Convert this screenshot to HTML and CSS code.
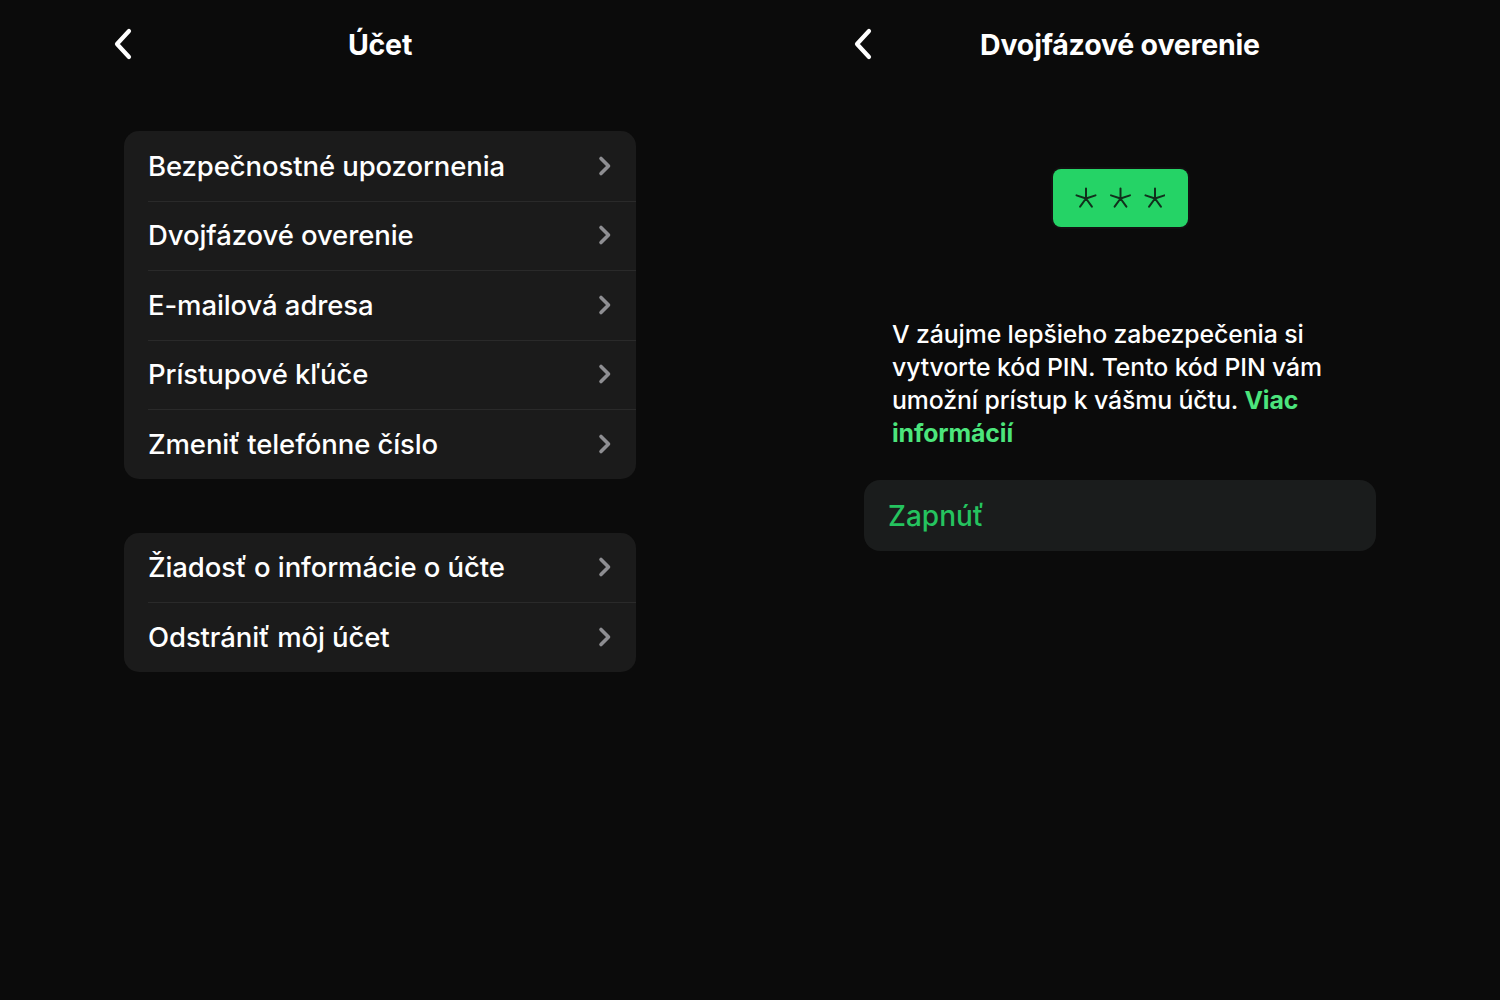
FILE: index.html
```html
<!DOCTYPE html>
<html lang="sk">
<head>
<meta charset="utf-8">
<link rel="stylesheet" href="styles.css">
</head>
<body>
<div class="screens">
  <section class="panel">
    <header class="nav">
      <svg class="back" viewBox="0 0 24 34" width="24" height="34"><path d="M18 4 L6 17 L18 30" fill="none" stroke="#fff" stroke-width="4.2" stroke-linecap="round" stroke-linejoin="round"/></svg>
      <h1 class="title">Účet</h1>
    </header>
    <div class="group g1">
      <div class="row"><span>Bezpečnostné upozornenia</span><svg class="chev" viewBox="0 0 14 22" width="14" height="22"><path d="M3 3.5 L10.5 11 L3 18.5" fill="none" stroke="#8e8e92" stroke-width="3.6" stroke-linecap="round" stroke-linejoin="round"/></svg></div>
      <div class="row"><span>Dvojfázové overenie</span><svg class="chev" viewBox="0 0 14 22" width="14" height="22"><path d="M3 3.5 L10.5 11 L3 18.5" fill="none" stroke="#8e8e92" stroke-width="3.6" stroke-linecap="round" stroke-linejoin="round"/></svg></div>
      <div class="row"><span>E-mailová adresa</span><svg class="chev" viewBox="0 0 14 22" width="14" height="22"><path d="M3 3.5 L10.5 11 L3 18.5" fill="none" stroke="#8e8e92" stroke-width="3.6" stroke-linecap="round" stroke-linejoin="round"/></svg></div>
      <div class="row"><span>Prístupové kľúče</span><svg class="chev" viewBox="0 0 14 22" width="14" height="22"><path d="M3 3.5 L10.5 11 L3 18.5" fill="none" stroke="#8e8e92" stroke-width="3.6" stroke-linecap="round" stroke-linejoin="round"/></svg></div>
      <div class="row"><span>Zmeniť telefónne číslo</span><svg class="chev" viewBox="0 0 14 22" width="14" height="22"><path d="M3 3.5 L10.5 11 L3 18.5" fill="none" stroke="#8e8e92" stroke-width="3.6" stroke-linecap="round" stroke-linejoin="round"/></svg></div>
    </div>
    <div class="group g2">
      <div class="row"><span>Žiadosť o informácie o účte</span><svg class="chev" viewBox="0 0 14 22" width="14" height="22"><path d="M3 3.5 L10.5 11 L3 18.5" fill="none" stroke="#8e8e92" stroke-width="3.6" stroke-linecap="round" stroke-linejoin="round"/></svg></div>
      <div class="row"><span>Odstrániť môj účet</span><svg class="chev" viewBox="0 0 14 22" width="14" height="22"><path d="M3 3.5 L10.5 11 L3 18.5" fill="none" stroke="#8e8e92" stroke-width="3.6" stroke-linecap="round" stroke-linejoin="round"/></svg></div>
    </div>
  </section>
  <section class="panel">
    <header class="nav">
      <svg class="back" viewBox="0 0 24 34" width="24" height="34"><path d="M18 4 L6 17 L18 30" fill="none" stroke="#fff" stroke-width="4.2" stroke-linecap="round" stroke-linejoin="round"/></svg>
      <h1 class="title">Dvojfázové overenie</h1>
    </header>
    <div class="pin-wrap">
      <div class="pin">
        <svg viewBox="0 0 90 24" width="90" height="24"><g fill="none" stroke="#11301c" stroke-width="2" stroke-linecap="round"><g transform="translate(11 12.5)"><path d="M0 0 V-10 M0 0 L9.5 -3.1 M0 0 L5.9 8.1 M0 0 L-5.9 8.1 M0 0 L-9.5 -3.1" /></g><g transform="translate(45.5 12.5)"><path d="M0 0 V-10 M0 0 L9.5 -3.1 M0 0 L5.9 8.1 M0 0 L-5.9 8.1 M0 0 L-9.5 -3.1" /></g><g transform="translate(80 12.5)"><path d="M0 0 V-10 M0 0 L9.5 -3.1 M0 0 L5.9 8.1 M0 0 L-5.9 8.1 M0 0 L-9.5 -3.1" /></g></g></svg>
      </div>
    </div>
    <p class="desc">V záujme lepšieho zabezpečenia si vytvorte kód PIN. Tento kód PIN vám umožní prístup k vášmu účtu. <a class="more">Viac informácií</a></p>
    <div class="group action"><span>Zapnúť</span></div>
  </section>
</div>
</body>
</html>
```
FILE: styles.css
```css
html, body {
  margin: 0;
  padding: 0;
  background: #0b0b0b;
  width: 1500px;
  height: 1000px;
  overflow: hidden;
  font-family: Inter, "Noto Sans", "Liberation Sans", sans-serif;
  color: #fff;
}
.screens {
  display: flex;
  padding: 0 10px;
}
.panel {
  width: 740px;
  display: flex;
  flex-direction: column;
  align-items: center;
}
.nav {
  width: 740px;
  height: 88px;
  position: relative;
  display: flex;
  align-items: center;
  justify-content: center;
}
.back {
  position: absolute;
  left: 101px;
  top: 27px;
}
.title {
  margin: 0;
  font-size: 28.5px;
  font-weight: 700;
  letter-spacing: -0.2px;
}
.group {
  width: 512px;
  background: #1b1b1b;
  border-radius: 15px;
  overflow: hidden;
}
.g1 { margin-top: 43px; }
.g2 { margin-top: 54px; }
.row {
  height: 69.5px;
  display: flex;
  align-items: center;
  justify-content: space-between;
  padding: 0 24px 0 24px;
  font-size: 27.5px;
  font-weight: 500;
  letter-spacing: -0.1px;
  position: relative;
}
.row + .row::before {
  content: "";
  position: absolute;
  left: 24px;
  right: 0;
  top: 0;
  height: 1px;
  background: #2a2a2a;
}
.chev { flex: none; }
.pin-wrap {
  margin-top: 79px;
  padding: 2px;
  background: #111;
  border-radius: 10px;
}
.pin {
  width: 135px;
  height: 58px;
  background: #25d366;
  border-radius: 8px;
  display: flex;
  align-items: center;
  justify-content: center;
}
.desc {
  width: 456px;
  margin: 89px 0 0 0;
  font-size: 24.8px;
  line-height: 33px;
  font-weight: 500;
  letter-spacing: -0.1px;
}
.more {
  color: #4ce57c;
  font-weight: 700;
}
.action {
  margin-top: 30px;
  height: 71px;
  background: #1a1c1c;
  display: flex;
  align-items: center;
  padding-left: 24px;
  box-sizing: border-box;
  border-radius: 16px;
  font-size: 28px;
  font-weight: 500;
  color: #25c35f;
}
```
